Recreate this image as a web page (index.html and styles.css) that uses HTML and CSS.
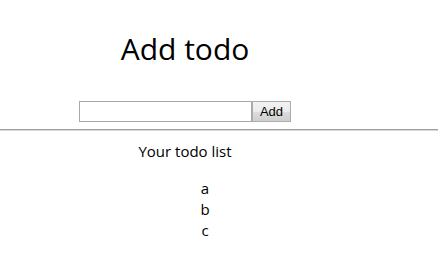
FILE: index.html
```html
<!DOCTYPE html>
<html>
<head>
<meta charset="utf-8">
<link rel="stylesheet" href="styles.css">
</head>
<body>
<div class="col">
  <h1 class="title">Add todo</h1>
  <form class="add-form">
    <input class="add-input" type="text">
    <button class="add-btn" type="button">Add</button>
  </form>
</div>
<div class="rule"></div>
<div class="col">
  <div class="list-title">Your todo list</div>
  <ul class="todo-list">
    <li>a</li>
    <li>b</li>
    <li>c</li>
  </ul>
</div>
</body>
</html>
```
FILE: styles.css
```css
html, body {
  margin: 0;
  padding: 0;
  background: #fff;
}
body {
  font-family: "Open Sans", "Noto Sans", sans-serif;
  color: #000;
}
.col {
  width: 370px;
  text-align: center;
}
.title {
  margin: 29px 0 0;
  font-size: 30px;
  line-height: 40px;
  font-weight: 400;
}
.add-form {
  margin: 32px 0 0;
  display: flex;
  justify-content: center;
}
.add-input {
  box-sizing: border-box;
  width: 173px;
  height: 21px;
  margin: 0;
  padding: 0 2px;
  border: 1px solid #a9a9a9;
  background: #fff;
  outline: none;
}
.add-btn {
  box-sizing: border-box;
  width: 39px;
  height: 21px;
  margin: 0;
  padding: 0;
  border: 1px solid #acacac;
  border-radius: 0;
  background: linear-gradient(#f2f2f2, #ebebeb 50%, #dddddd 51%, #cfcfcf);
  font-family: "Liberation Sans", Arial, sans-serif;
  font-size: 13px;
  color: #000;
}
.rule {
  margin-top: 7px;
  border-top: 1px solid #a0a0a0;
  border-bottom: 1px solid #d8d8d8;
}
.list-title {
  margin-top: 10px;
  font-size: 15px;
  line-height: 20px;
}
.todo-list {
  list-style: none;
  margin: 17px 0 0;
  padding: 0 0 0 40px;
  font-size: 15px;
  line-height: 21px;
}
```
